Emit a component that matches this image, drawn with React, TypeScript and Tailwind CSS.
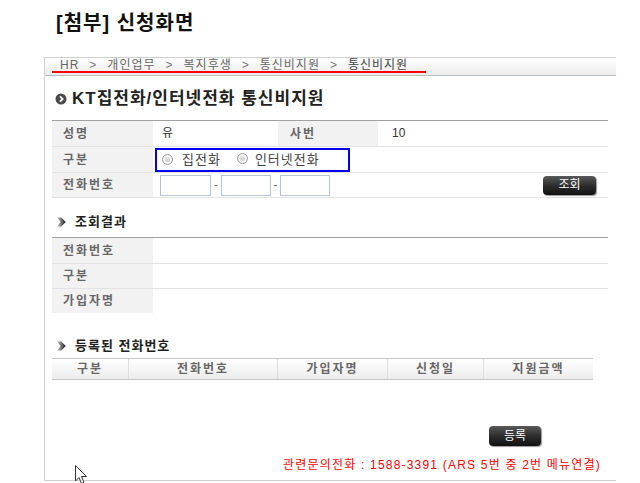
import React from 'react';

const font = { fontFamily: '"Liberation Sans", "Noto Sans CJK KR", sans-serif' };

const CircleArrow = () => (
  <svg width="12" height="12" viewBox="0 0 12 12" className="shrink-0">
    <circle cx="6" cy="6" r="5.5" fill="#4a4a4a" />
    <path d="M5 3.3 L7.6 6 L5 8.7" stroke="#fff" strokeWidth="1.8" fill="none" />
  </svg>
);

const Chevron = () => (
  <svg width="9" height="10" viewBox="0 0 9 10" className="shrink-0">
    <defs>
      <linearGradient id="chev" x1="0" y1="0" x2="1" y2="0">
        <stop offset="0" stopColor="#c8c8c8" />
        <stop offset="1" stopColor="#1a1a1a" />
      </linearGradient>
    </defs>
    <path d="M0 0.5 L4.2 0.5 L8.8 5 L4.2 9.5 L0 9.5 L3.6 5 Z" fill="url(#chev)" />
  </svg>
);

const Radio = () => (
  <span className="inline-block w-[11px] h-[11px] rounded-full border border-[#a0a0a0] bg-gradient-to-b from-[#e8e8e8] to-[#c8c8c8] shadow-[inset_0_0_0_2px_#f4f4f4]" />
);

const DarkButton = ({ label, className }: { label: string; className?: string }) => (
  <button className={`flex items-center justify-center rounded-[4px] bg-gradient-to-b from-[#5a5a5a] via-[#2e2e2e] to-[#111] text-white text-[12px] leading-none shadow-[1px_1px_1px_#999] ${className ?? ''}`}>
    {label}
  </button>
);

const SectionTitle = ({ text, className }: { text: string; className: string }) => (
  <div className={`flex items-center gap-[9px] pl-[5px] ${className}`}>
    <Chevron />
    <span className="text-[13px] font-bold text-[#222] leading-[16px] tracking-[1px]">{text}</span>
  </div>
);

const Label = ({ text }: { text: string }) => (
  <div className="bg-[#f2f2f2] flex items-center pl-[11px] text-[12px] font-bold text-[#666] tracking-[2px]">{text}</div>
);

export default function App() {
  const crumbs = ['HR', '개인업무', '복지후생', '통신비지원', '통신비지원'];
  return (
    <div className="relative w-[640px] h-[483px] bg-white overflow-hidden" style={font}>
      <h1 className="pt-[11px] pl-[56px] text-[20px] leading-[24px] font-bold text-[#111] tracking-[1px]">[첨부] 신청화면</h1>

      <div className="mt-[22px] ml-[44px] w-[572px] h-[424px] border-l border-t border-b border-[#cfcfcf] flex flex-col">
        {/* breadcrumb */}
        <div className="h-[18px] bg-gradient-to-b from-white to-[#ececec] border-b border-[#b8bec6] pl-[7px]">
          <div className="w-[374px] h-[15px] border-b-2 border-[#ff0000] flex items-center gap-[10px] pl-[8px] text-[12px] leading-none text-[#666] tracking-[1px]">
            {crumbs.map((c, i) => (
              <React.Fragment key={i}>
                {i > 0 && <span className="text-[#777]">&gt;</span>}
                <span className={i === crumbs.length - 1 ? 'text-[#444]' : ''}>{c}</span>
              </React.Fragment>
            ))}
          </div>
        </div>

        <div className="pl-[7px] pr-[8px] flex flex-col">
          {/* page title */}
          <div className="h-[44px] flex items-center gap-[5px] pl-[3px] pt-[1px]">
            <CircleArrow />
            <span className="text-[17px] font-bold text-[#222] leading-[20px] tracking-[1px]">KT집전화/인터넷전화 통신비지원</span>
          </div>

          {/* table 1 */}
          <div className="border-t border-[#a0a0a0] grid grid-cols-[101px_125px_100px_1fr] text-[12px]">
            <Label text="성명" />
            <div className="h-[25px] pl-[9px] pt-[3px] text-[#333]">유</div>
            <div className="bg-[#f2f2f2] flex items-center pl-[12px] text-[12px] font-bold text-[#666] tracking-[2px]">사번</div>
            <div className="h-[25px] pl-[14px] pt-[3px] text-[#333]">10</div>
            <div className="col-span-4 h-px bg-[#e2e2e2]" />
            <Label text="구분" />
            <div className="col-span-3 h-[25px] flex items-center">
              <div className="ml-[2px] w-[195px] h-[24px] border-2 border-[#0000ee] flex items-center pl-[5px] text-[#444] text-[13px] tracking-[1px]">
                <Radio />
                <span className="ml-[9px]">집전화</span>
                <span className="ml-[16px]"><Radio /></span>
                <span className="ml-[7px]">인터넷전화</span>
              </div>
            </div>
            <div className="col-span-4 h-px bg-[#e2e2e2]" />
            <Label text="전화번호" />
            <div className="col-span-3 h-[24px] flex items-center pl-[7px] text-[#666]">
              <div className="w-[51px] h-[21px] border border-[#b5c6d8]" />
              <span className="w-[10px] text-center">-</span>
              <div className="w-[50px] h-[21px] border border-[#b5c6d8]" />
              <span className="w-[9px] text-center">-</span>
              <div className="w-[50px] h-[21px] border border-[#b5c6d8]" />
              <DarkButton label="조회" className="ml-auto mr-[12px] w-[53px] h-[19px]" />
            </div>
            <div className="col-span-4 h-px bg-[#e2e2e2]" />
          </div>

          <SectionTitle text="조회결과" className="h-[39px] pt-[8px]" />

          {/* table 2 */}
          <div className="border-t border-[#a0a0a0] grid grid-cols-[101px_1fr] text-[12px]">
            <Label text="전화번호" />
            <div className="h-[25px]" />
            <div className="col-span-2 h-px bg-[#e2e2e2]" />
            <Label text="구분" />
            <div className="h-[24px]" />
            <div className="col-span-2 h-px bg-[#e2e2e2]" />
            <Label text="가입자명" />
            <div className="h-[24px]" />
          </div>

          <SectionTitle text="등록된 전화번호" className="h-[45px] pt-[20px]" />

          {/* table 3 */}
          <div className="w-[541px] h-[22px] border-t border-b border-[#c8c8c8] bg-gradient-to-b from-white to-[#ececec] grid grid-cols-[76px_149px_110px_96px_110px] text-[12px] font-bold text-[#666] tracking-[2px]">
            {['구분', '전화번호', '가입자명', '신청일', '지원금액'].map((h, i) => (
              <div key={h} className={`flex items-center justify-center ${i > 0 ? 'border-l border-[#dcdcdc]' : ''}`}>{h}</div>
            ))}
          </div>

          <div className="flex justify-end mt-[46px] pr-[67px]">
            <DarkButton label="등록" className="w-[52px] h-[20px]" />
          </div>

          <div className="flex justify-end mt-[12px] pr-[7px] text-[12px] leading-[14px] text-[#ff0000] tracking-[1.2px]">
            관련문의전화 : 1588-3391 (ARS 5번 중 2번 메뉴연결)
          </div>
        </div>
      </div>

      {/* mouse cursor */}
      <svg width="14" height="20" viewBox="0 0 14 20" className="absolute left-[75px] top-[465px]">
        <path d="M0.5 0.5 L0.5 16 L4 12.5 L6.5 18.5 L9 17.5 L6.5 11.5 L11.5 11.5 Z" fill="#fff" stroke="#333" strokeWidth="1" />
      </svg>
    </div>
  );
}
